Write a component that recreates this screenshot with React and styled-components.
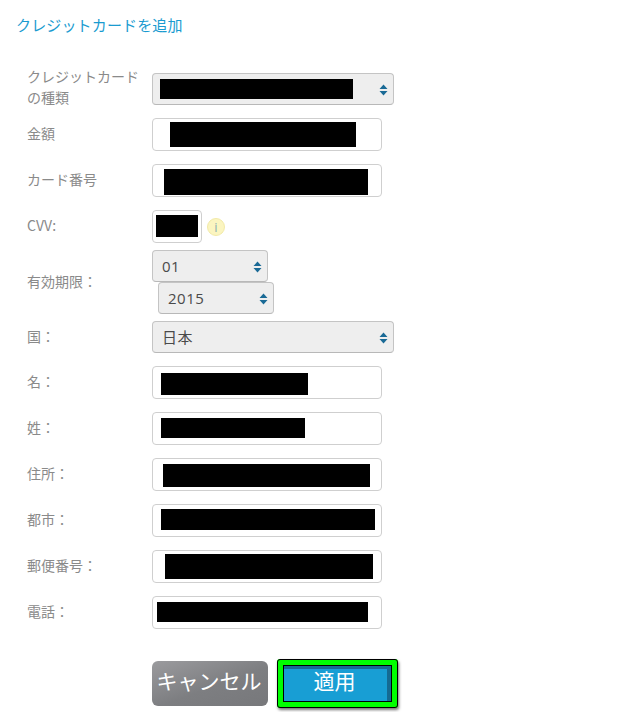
import React from 'react'
import styled, { createGlobalStyle } from 'styled-components'

const Global = createGlobalStyle`
  html, body { margin: 0; padding: 0; background: #fff; }
  body { font-family: "Open Sans", "Liberation Sans", "Noto Sans CJK JP", sans-serif; }
`

const Page = styled.div`
  width: 634px;
  height: 712px;
  overflow: hidden;
  padding: 14px 0 0 16px;
  box-sizing: border-box;
`

const Title = styled.h2`
  margin: 0 0 30px 0;
  height: 22px;
  font-size: 15px;
  line-height: 22px;
  letter-spacing: 0.15px;
  font-weight: 400;
  color: #1a9bd0;
  font-family: "Noto Sans CJK JP", sans-serif;
`

const Form = styled.div`
  display: flex;
  flex-direction: column;
  padding-left: 11px;
`

const Row = styled.div`
  display: grid;
  grid-template-columns: 125px 1fr;
  align-items: ${p => p.$end ? 'end' : 'center'};
  margin-bottom: ${p => p.$gap ?? 13}px;
`

const Label = styled.div`
  font-size: 14px;
  line-height: 21px;
  color: #8a8a8a;
  font-family: "Noto Sans CJK JP", sans-serif;
  padding-bottom: 2px;
  margin-bottom: ${p => p.$pull ?? 0}px;
  align-self: ${p => p.$pull ? 'start' : 'center'};
`

const Field = styled.div`
  display: flex;
  align-items: center;
`

const Input = styled.div`
  width: ${p => p.$w ?? 230}px;
  height: 33px;
  box-sizing: border-box;
  background: #fff;
  border: 1px solid #cfcfcf;
  border-radius: 4px;
  display: flex;
  align-items: flex-start;
  padding-left: ${p => p.$pad}px;
`

const Select = styled.div`
  position: relative;
  width: ${p => p.$w}px;
  height: 32px;
  margin-left: ${p => p.$shift ?? 0}px;
  box-sizing: border-box;
  background: #eeeeee;
  border: 1px solid #c4c4c4;
  border-bottom-color: #b8b8b8;
  border-radius: 4px;
  display: flex;
  align-items: flex-start;
  padding-left: ${p => p.$pad ?? 9}px;
  font-size: 15px;
  line-height: 30px;
  color: #4a4a4a;
  letter-spacing: 0.5px;
`

const Arrows = styled.svg`
  position: absolute;
  right: 5px;
  top: 10px;
  width: 9px;
  height: 12px;
`

const Redact = styled.div`
  background: #000;
  width: ${p => p.$w}px;
  height: ${p => p.$h}px;
  margin-top: ${p => p.$top}px;
`

const Info = styled.span`
  width: 18px;
  height: 18px;
  margin-left: 5px;
  border-radius: 50%;
  background: #fbf5c0;
  border: 1px solid #f2eaa8;
  box-sizing: border-box;
  display: flex;
  align-items: center;
  justify-content: center;
  font-size: 13px;
  color: #8fb0b0;
`

const Stack = styled.div`
  display: flex;
  flex-direction: column;
`

const Actions = styled.div`
  display: flex;
  align-items: center;
  gap: 9px;
  margin: 17px 0 0 125px;
`

const Cancel = styled.button`
  width: 116px;
  height: 45px;
  border: 0;
  border-radius: 6px;
  padding: 0 2px 7px 0;
  background: linear-gradient(160deg, #9b9b9e 0%, #7d7e81 55%, #77787b 100%);
  color: #fff;
  font-size: 21px;
  font-family: "Noto Sans CJK JP", sans-serif;
`

const Apply = styled.button`
  width: 121px;
  height: 49px;
  box-sizing: border-box;
  padding: 0 6px 7px 0;
  border: 6px solid #00ff00;
  outline: 1px solid #000;
  outline-offset: -1px;
  border-radius: 3px;
  background: #189ed4;
  box-shadow: inset 0 0 0 1px #000, inset -5px 4px 0 0 #156a92, 1px 2px 3px rgba(0, 0, 0, 0.55);
  color: #fff;
  font-size: 21px;
  font-family: "Noto Sans CJK JP", sans-serif;
`

const SelectArrows = () => (
  <Arrows viewBox="0 0 9 12">
    <path d="M4.5 0.5 L8.5 5 H0.5 Z M0.5 7 H8.5 L4.5 11.5 Z" fill="#1a6a96" />
  </Arrows>
)

const fields = [
  { label: '名：', pad: 8, w: 147, h: 22, top: 6 },
  { label: '姓：', pad: 8, w: 144, h: 20, top: 5 },
  { label: '住所：', pad: 10, w: 207, h: 23, top: 5 },
  { label: '都市：', pad: 8, w: 214, h: 21, top: 4 },
  { label: '郵便番号：', pad: 12, w: 208, h: 25, top: 3 },
  { label: '電話：', pad: 4, w: 211, h: 20, top: 5 },
]

const App = () => {
  return (
    <Page>
      <Global />
      <Title>クレジットカードを追加</Title>
      <Form>
        <Row $end>
          <Label $pull={-5}>クレジットカードの種類</Label>
          <Field>
            <Select $w={242} $pad={7}>
              <Redact $w={193} $h={20} $top={5} />
              <SelectArrows />
            </Select>
          </Field>
        </Row>
        <Row>
          <Label>金額</Label>
          <Field><Input $pad={17}><Redact $w={186} $h={25} $top={3} /></Input></Field>
        </Row>
        <Row>
          <Label>カード番号</Label>
          <Field><Input $pad={11}><Redact $w={204} $h={26} $top={4} /></Input></Field>
        </Row>
        <Row $gap={7}>
          <Label>CVV:</Label>
          <Field>
            <Input $w={50} $pad={3}><Redact $w={42} $h={22} $top={4} /></Input>
            <Info>i</Info>
          </Field>
        </Row>
        <Row $gap={7}>
          <Label>有効期限：</Label>
          <Stack>
            <Select $w={116}>01<SelectArrows /></Select>
            <Select $w={116} $shift={6}>2015<SelectArrows /></Select>
          </Stack>
        </Row>
        <Row>
          <Label>国：</Label>
          <Field>
            <Select $w={242}>日本<SelectArrows /></Select>
          </Field>
        </Row>
        {fields.map(f => (
          <Row key={f.label}>
            <Label>{f.label}</Label>
            <Field><Input $pad={f.pad}><Redact $w={f.w} $h={f.h} $top={f.top} /></Input></Field>
          </Row>
        ))}
        <Actions>
          <Cancel>キャンセル</Cancel>
          <Apply>適用</Apply>
        </Actions>
      </Form>
    </Page>
  )
}

export default App
